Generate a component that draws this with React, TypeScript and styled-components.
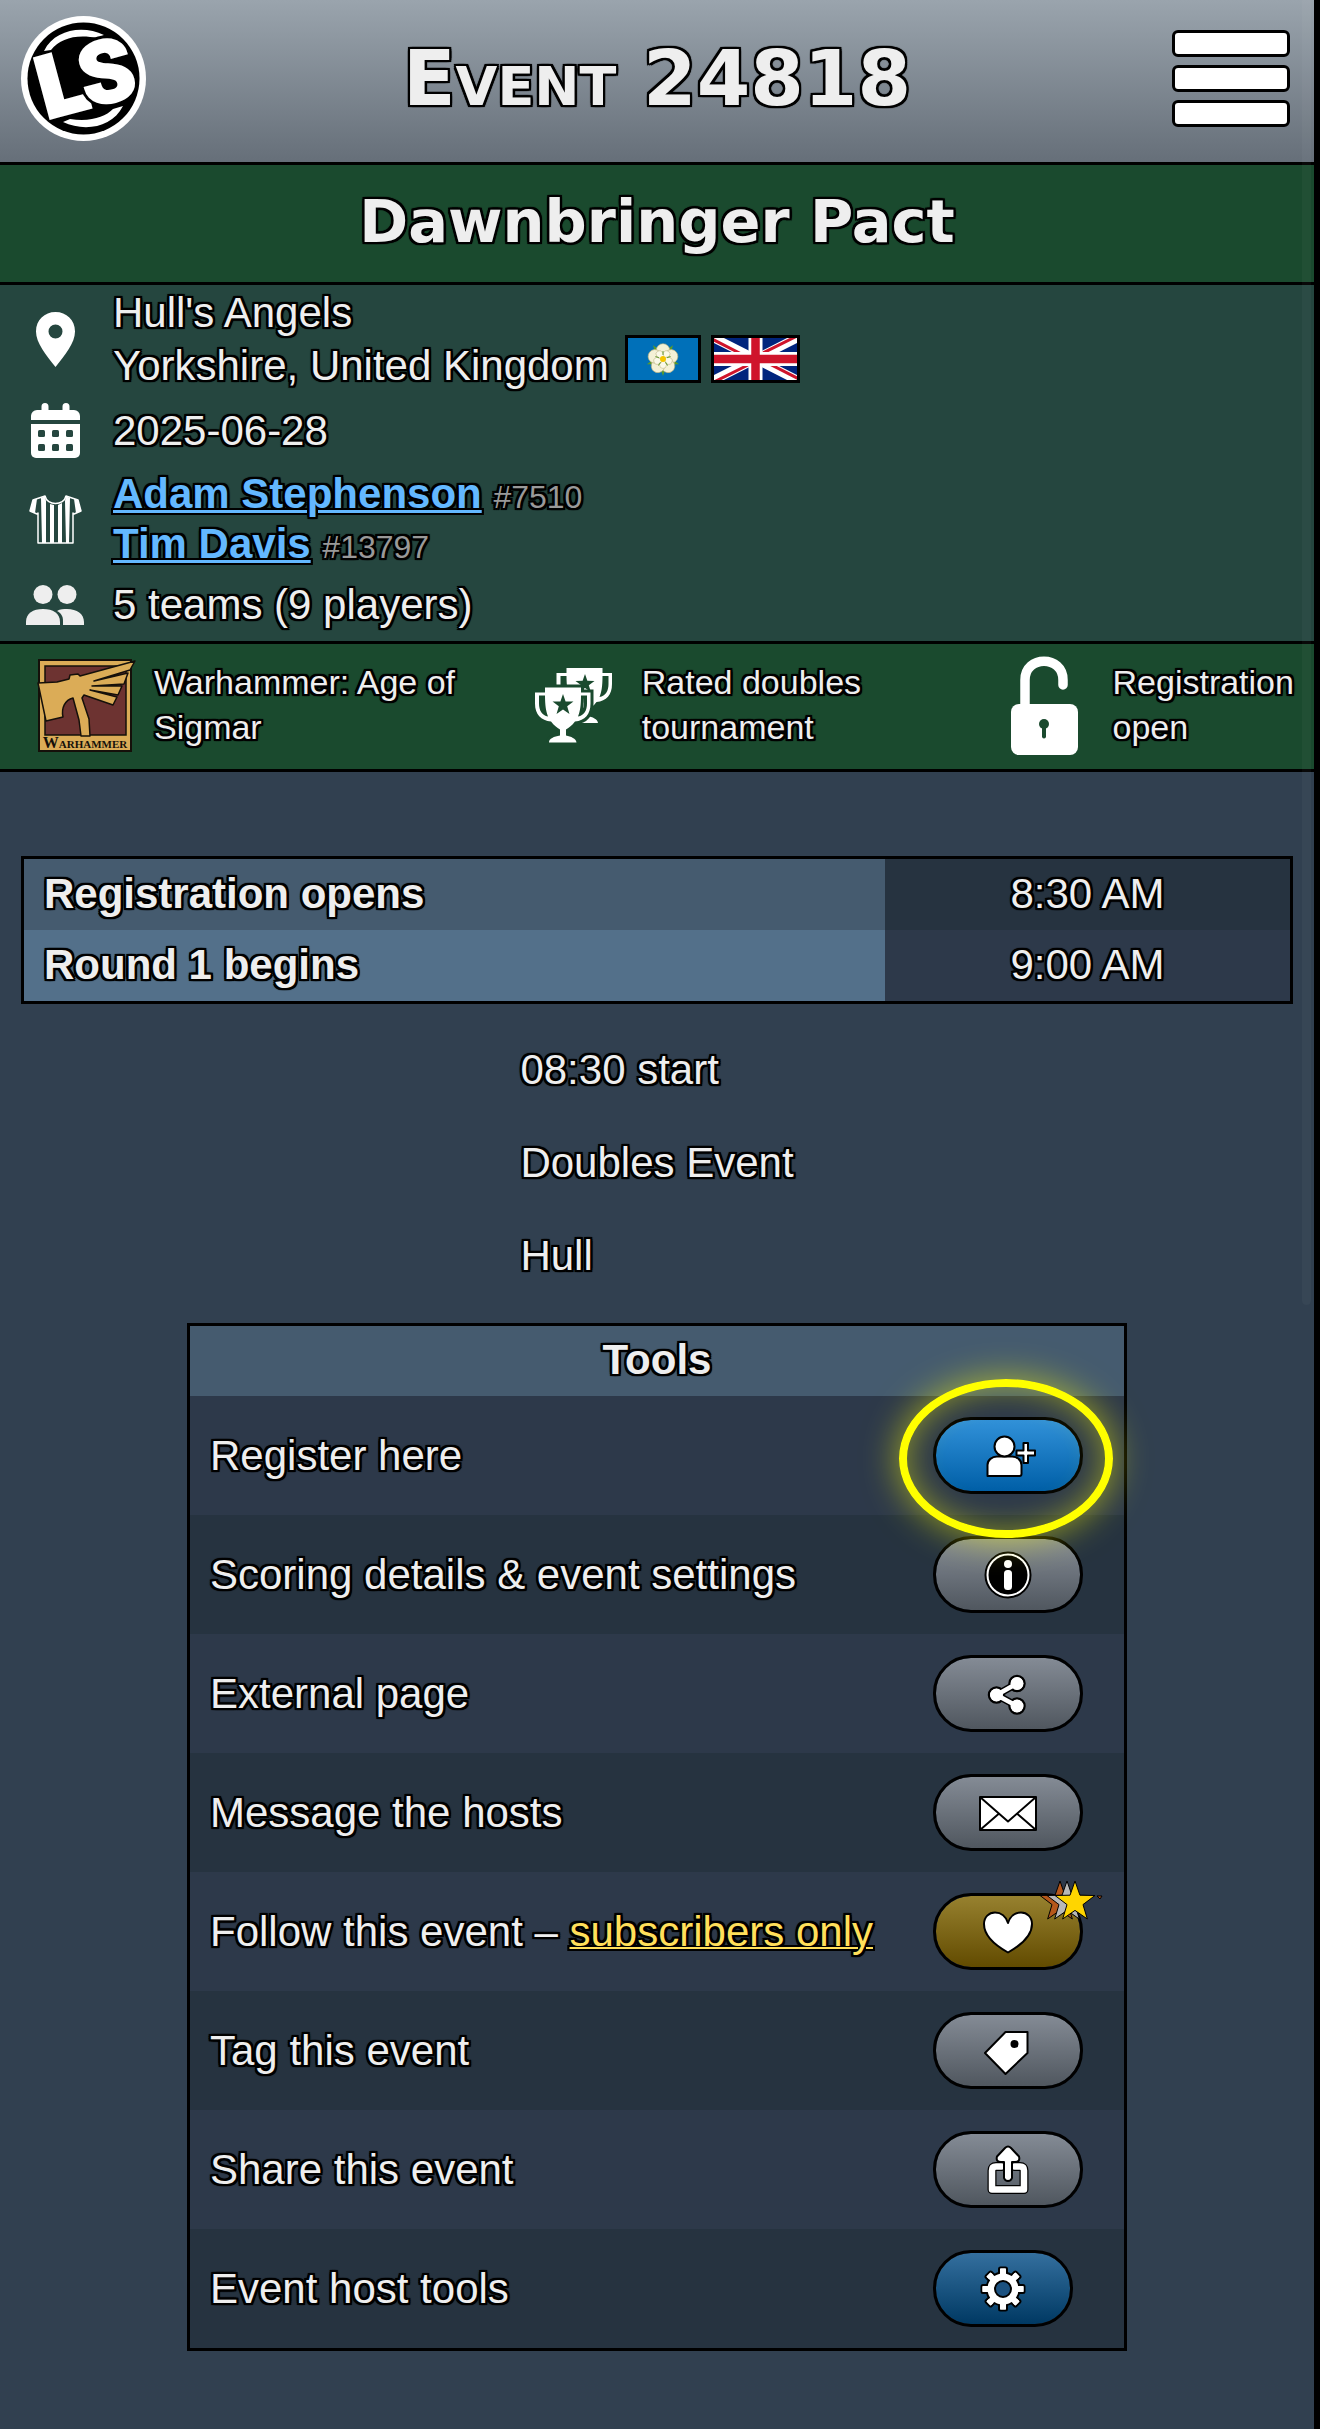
import React from "react";
import styled, { createGlobalStyle, css } from "styled-components";

const outline = css`
  text-shadow:
    -2px -2px 1px #000, 0 -2px 1px #000, 2px -2px 1px #000,
    -2px 0 1px #000, 2px 0 1px #000,
    -2px 2px 1px #000, 0 2px 1px #000, 2px 2px 1px #000,
    -2px -2px 0 #000, 2px -2px 0 #000, -2px 2px 0 #000, 2px 2px 0 #000,
    0 -2px 0 #000, 0 2px 0 #000, -2px 0 0 #000, 2px 0 0 #000;
`;

const GlobalStyle = createGlobalStyle`
  * { box-sizing: border-box; }
  body {
    margin: 0;
    background: #314050;
    color: #eee;
    font-family: "Liberation Sans", Arial, sans-serif;
    font-size: 42px;
    line-height: 52px;
    ${outline}
  }
  svg { display: block; flex: none; overflow: visible; }
`;

const Page = styled.div`
  position: relative;
  min-height: 100vh;
  padding-bottom: 78px;
  border-right: 6px solid #000;
`;

const ScrollThumb = styled.div`
  position: absolute;
  top: 0;
  right: 3px;
  width: 9px;
  height: 1305px;
  border-radius: 0 0 5px 5px;
  background: rgba(255, 255, 255, 0.03);
`;

const TopBar = styled.header`
  display: grid;
  grid-template-columns: 125px 1fr 125px;
  align-items: center;
  height: 165px;
  padding: 0 21px 5px;
  border-bottom: 3px solid #000;
  background: linear-gradient(#9aa4ad, #666f79);
`;

const PageTitle = styled.h1`
  margin: 0;
  text-align: center;
  font: bold 77px/100px "DejaVu Sans", Verdana, sans-serif;
  font-variant: small-caps;
`;

const MenuButton = styled.button`
  display: flex;
  flex-direction: column;
  gap: 8px;
  width: 118px;
  padding: 0;
  margin: 0 auto;
  border: 0;
  background: none;
`;

const MenuBar = styled.span`
  height: 27px;
  border: 3px solid #000;
  border-radius: 6px;
  background: #fff;
`;

const EventName = styled.h2`
  margin: 0;
  padding: 17px 21px 20px;
  border-bottom: 3px solid #000;
  background: #1a4a2e;
  text-align: center;
  font: bold 59px/80px "DejaVu Sans", Verdana, sans-serif;
`;

const Facts = styled.section`
  display: flex;
  flex-direction: column;
  gap: 11px;
  padding: 1px 21px 11px;
  border-bottom: 3px solid #000;
  background: #25463f;
`;

const Fact = styled.div<{ $line: number }>`
  display: grid;
  grid-template-columns: 68px 1fr;
  column-gap: 24px;
  align-items: center;
  line-height: ${(p) => p.$line}px;
  > svg { justify-self: center; }
`;

const Flag = styled.svg`
  display: inline-block !important;
  overflow: hidden !important;
  height: 48px;
  margin: -8px 0 -3px 5px;
  border: 3px solid #000;
  vertical-align: baseline;
  & + & { margin-left: 10px; }
`;

const HostLink = styled.a`
  color: #63b8ff;
  font-weight: bold;
  text-decoration-thickness: 3px;
`;

const HostId = styled.span`
  color: #999;
  font-size: 32px;
  line-height: 1;
`;

const Badges = styled.section`
  display: grid;
  grid-template-columns: 487fr 470fr 299fr;
  align-items: center;
  height: 128px;
  padding: 0 20px 3px 36px;
  border-bottom: 3px solid #000;
  background: #1a4a2e;
  font-size: 34px;
  line-height: 45px;
`;

const Badge = styled.div`
  display: grid;
  grid-template-columns: 100px 1fr;
  column-gap: 18px;
  align-items: center;
  > svg { justify-self: center; }
`;

const Schedule = styled.table`
  width: calc(100% - 42px);
  margin: 84px 21px 40px;
  border: 3px solid #000;
  border-spacing: 0;
  table-layout: fixed;
  th, td { height: 71px; padding: 0 20px 2px; }
  th { width: 68%; text-align: left; background: #455b6f; }
  td { text-align: center; background: #263340; }
  tr:nth-child(2) th { background: #53708a; }
  tr:nth-child(2) td { background: #2d394a; }
`;

const Description = styled.div`
  width: fit-content;
  margin: 0 auto 41px;
  p { margin: 0 0 41px; }
`;

const Tools = styled.table`
  width: calc(100% - 42px);
  max-width: 940px;
  margin: 0 auto;
  border: 3px solid #000;
  border-spacing: 0;
  th { height: 70px; padding: 0 20px 2px; background: #455b6f; }
  td { height: 119px; padding: 0 0 0 20px; background: #2d394a; }
  td + td { width: 209px; padding-left: 18px; }
  tbody tr:nth-child(even) td { background: #263340; }
`;

const SubscriberLink = styled.a`
  color: #ffdf5a;
  text-decoration-thickness: 2px;
`;

const ButtonSlot = styled.div`
  position: relative;
  width: fit-content;
`;

const tones = {
  grey: "linear-gradient(#848b95, #50575f)",
  blue: "linear-gradient(#3191d9, #005fa7)",
  gold: "linear-gradient(#97812f, #624b00)",
  navy: "linear-gradient(#346f9e, #003963)",
};
type Tone = keyof typeof tones;

const PillButton = styled.button<{ $tone: Tone; $narrow?: boolean }>`
  display: flex;
  align-items: center;
  justify-content: center;
  width: ${(p) => (p.$narrow ? 140 : 150)}px;
  height: 77px;
  padding: 0;
  border: 3px solid #000;
  border-radius: 38px;
  background: ${(p) => tones[p.$tone]} padding-box;
`;

const Highlight = styled.span`
  position: absolute;
  z-index: 2;
  top: -38px;
  left: -34px;
  width: 214px;
  height: 159px;
  border: 8px solid #ff0;
  border-radius: 50%;
  box-shadow: 0 0 34px 2px rgba(255, 255, 0, 0.5), inset 0 0 32px rgba(255, 255, 0, 0.45);
  pointer-events: none;
`;

const StarBadge = styled.svg`
  position: absolute;
  z-index: 1;
  top: -14px;
  left: 104px;
`;

const starPoints = (cx: number, cy: number, r: number) =>
  Array.from({ length: 10 }, (_, i) => {
    const radius = i % 2 ? r * 0.4 : r;
    const a = -Math.PI / 2 + (i * Math.PI) / 5;
    return `${(cx + radius * Math.cos(a)).toFixed(2)},${(cy + radius * Math.sin(a)).toFixed(2)}`;
  }).join(" ");

const Logo = () => (
  <svg width="125" height="125" viewBox="0 0 125 125" role="img" aria-label="LS">
    <circle cx="62.500" cy="62.500" r="62.500" fill="#fff" />
    <circle cx="62.500" cy="62.500" r="56" fill="#000" />
    <path d="M23 35C34 13 62 9 83 19L77 22C55 18 40 22 30 34Z" fill="#fff" />
    <path d="M102 90C91 112 63 116 42 106L49 103C70 106 84 101 92 93Z" fill="#fff" />
    <g fontFamily="Roboto, sans-serif" fontWeight="900" fill="#fff" stroke="#fff" strokeWidth="5" style={{ textShadow: "none" }}>
      <text transform="translate(26 102) rotate(-15)" fontSize="84">L</text>
      <text transform="translate(67 92) rotate(-15)" fontSize="86" stroke="#000" strokeWidth="9" paintOrder="stroke">S</text>
      <text transform="translate(67 92) rotate(-15)" fontSize="86" strokeWidth="3">S</text>
    </g>
  </svg>
);

const PinIcon = () => (
  <svg width="39" height="55" viewBox="0 0 39 55">
    <path fill="#fff" fillRule="evenodd" d="M19.500 0C8.500 0 0 8 0 19.500C0 31 10 43 19.500 55C29 43 39 31 39 19.500C39 8 30.500 0 19.500 0ZM19.500 12.500A7 7 0 1 1 19.500 26.500A7 7 0 1 1 19.500 12.500Z" />
  </svg>
);

const CalendarIcon = () => (
  <svg width="49" height="55" viewBox="0 0 49 55">
    <path fill="#fff" d="M10.500 3.500a3.500 3.500 0 0 1 7 0V7h14V3.500a3.500 3.500 0 0 1 7 0V7H43a6 6 0 0 1 6 6v4H0v-4a6 6 0 0 1 6-6h4.500Z" />
    <path fill="#fff" d="M0 21h49v29a5 5 0 0 1-5 5H5a5 5 0 0 1-5-5Z" />
    {[27, 41].map((y) => [7, 21, 35].map((x) => <rect key={`${x}-${y}`} x={x} y={y} width="7" height="7" rx="1.500" fill="#25463f" />))}
  </svg>
);

const JerseyIcon = () => (
  <svg width="53" height="49" viewBox="0 0 53 49">
    <path fill="none" stroke="#fff" strokeWidth="1.500" strokeLinejoin="round" d="M16 1L4 5L1 16L8 19L9 18V48H44V18L45 19L52 16L49 5L37 1C35 11 18 11 16 1Z" />
    <path fill="#fff" d="M4 5L8 4L6 18L1 16ZM49 5L45 4L47 18L52 16ZM12 3L16 1L17 6V48H13ZM21 9L25 10V48H21ZM29 10L33 8V48H29ZM36 6L37 1L41 3L40 48H37Z" />
  </svg>
);

const PeopleIcon = () => (
  <svg width="58" height="40" viewBox="0 0 58 40" fill="#eee">
    <circle cx="17" cy="9.500" r="9.500" />
    <circle cx="41" cy="9.500" r="9.500" />
    <path d="M0 40V37C0 28 7 24 17 24S34 28 34 37V40Z" />
    <path d="M37 40V36C37 31 35 28 31 26C34 24 38 24 41 24C51 24 58 29 58 37V40Z" />
  </svg>
);

const WarhammerIcon = () => (
  <svg width="100" height="95" viewBox="0 0 100 95">
    <rect x="3" y="2" width="92" height="91" fill="#dbac57" stroke="#15100a" strokeWidth="2" />
    <rect x="9" y="8" width="81" height="69" fill="#6d3331" stroke="#15100a" strokeWidth="1.500" />
    <path
      fill="#dbac57"
      stroke="#15100a"
      strokeWidth="1.500"
      strokeLinejoin="round"
      d="M2 25L21 24L33 21L34 17L42 16L44 18L99 3L94 12L58 23L92 15L88 26L56 28L86 28L82 37L54 32L81 39L77 47L48 37L46 40L53 61L54 78L45 78L43 62L37 40C29 42 25 50 27 59L10 63Z"
    />
    <text x="49" y="90" textAnchor="middle" fontFamily="Liberation Serif, serif" fontSize="16" fontWeight="bold" fill="#15100a" style={{ fontVariant: "small-caps", textShadow: "none" }}>
      Warhammer
    </text>
  </svg>
);

const cup =
  "M10 0H46V5H55.500V16C55.500 27 50 33 40 34C37 38 34 40 31 42V48C36 49 41 51 41.500 55H14C14 51 19 49 25 48V42C22 40 19 38 16 34C6 33 0 27 0 16V5H10ZM10 8H4V16C4 23 7 28 13 29C11 24 10 18 10 8ZM46 8C46 18 45 24 43 29C49 28 52 23 52 16V8Z";

const TrophyIcon = () => (
  <svg width="78" height="76" viewBox="0 0 78 76">
    <path d={cup} transform="translate(21.500 1)" fill="#fff" fillRule="evenodd" />
    <polygon points={starPoints(50, 17, 10)} fill="#1a4a2e" />
    <path d={cup} transform="translate(0 20.500)" fill="#1a4a2e" stroke="#1a4a2e" strokeWidth="6" />
    <path d={cup} transform="translate(0 20.500)" fill="#fff" fillRule="evenodd" />
    <polygon points={starPoints(28, 38, 11)} fill="#1a4a2e" />
  </svg>
);

const LockIcon = () => (
  <svg width="67" height="99" viewBox="0 0 67 99">
    <path d="M14 52V24C14 -1 52 -1 52 24V29" fill="none" stroke="#fff" strokeWidth="9.500" strokeLinecap="round" />
    <rect y="48" width="67" height="51" rx="8" fill="#fff" />
    <circle cx="33" cy="68" r="5" fill="#1a4a2e" />
    <path d="M33 68V80.500" stroke="#1a4a2e" strokeWidth="4" strokeLinecap="round" />
  </svg>
);

const YorkshireFlag = () => (
  <Flag width="76" viewBox="0 0 70 42" role="img" aria-label="Yorkshire">
    <rect width="70" height="42" fill="#0070b9" />
    <polygon points={starPoints(35, 21, 17)} fill="#5a9a2a" transform="rotate(36 35 21)" />
    {[0, 72, 144, 216, 288].map((a) => (
      <circle key={a} cx="35" cy="12.500" r="6.800" fill="#f4f1d6" stroke="#b9ae7a" strokeWidth="0.600" transform={`rotate(${a} 35 21)`} />
    ))}
    {[36, 108, 180, 252, 324].map((a) => (
      <ellipse key={a} cx="35" cy="15.500" rx="3.500" ry="4" fill="#fbf9e8" stroke="#b9ae7a" strokeWidth="0.500" transform={`rotate(${a} 35 21)`} />
    ))}
    {[0, 72, 144, 216, 288].map((a) => (
      <path key={a} d="M35 17V13" stroke="#6a9a3a" strokeWidth="1" transform={`rotate(${a} 35 21)`} />
    ))}
    <circle cx="35" cy="21" r="3" fill="#f5c400" />
  </Flag>
);

const UnionFlag = () => (
  <Flag width="89" viewBox="0 0 83 42" role="img" aria-label="United Kingdom">
    <rect width="83" height="42" fill="#00247d" />
    <path d="M0 0L83 42M83 0L0 42" stroke="#fff" strokeWidth="9" />
    <path d="M-1 1.500L41 23M84 40.500L42 19M82 -1.500L40 19.500M1 43.500L43 22.500" stroke="#cf142b" strokeWidth="3" />
    <path d="M41.500 0V42M0 21H83" stroke="#fff" strokeWidth="14" />
    <path d="M41.500 0V42M0 21H83" stroke="#cf142b" strokeWidth="8.500" />
  </Flag>
);

const Glyph = ({ children }: { children: React.ReactNode }) => (
  <svg width="60" height="50" viewBox="-30 -25 60 50" fill="#fff" stroke="#000" strokeWidth="2" strokeLinejoin="round">
    {children}
  </svg>
);

const RegisterGlyph = () => (
  <Glyph>
    <path d="M15.500 -13h4.500v7.500h7v5h-7v7.500h-4.500v-7.500h-7v-5h7Z" />
    <path d="M-20.500 20V9C-20.500 4 -16 .500 -11 .500H4C9 .500 13.500 4 13.500 9V18Q13.500 20 11.500 20Z" />
    <circle cx="-3.500" cy="-9.500" r="10" />
  </Glyph>
);

const InfoGlyph = () => (
  <Glyph>
    <circle r="22.500" />
    <circle r="19.500" fill="#000" stroke="none" />
    <circle cy="-11" r="4" stroke="none" />
    <rect x="-4" y="-5" width="8" height="20" rx="3.500" stroke="none" />
  </Glyph>
);

const LinkGlyph = () => (
  <Glyph>
    <g stroke="#000" strokeWidth="2.500">
      <circle cx="-11.500" cy="1" r="7.500" />
      <circle cx="9" cy="-10.500" r="7.500" />
      <circle cx="9" cy="12" r="7.500" />
    </g>
    <path d="M9 -10.500L-11.500 1L9 12" fill="none" strokeWidth="7.500" />
    <path d="M9 -10.500L-11.500 1L9 12" fill="none" stroke="#fff" strokeWidth="4.500" />
    <g stroke="none">
      <circle cx="-11.500" cy="1" r="6.500" />
      <circle cx="9" cy="-10.500" r="6.500" />
      <circle cx="9" cy="12" r="6.500" />
    </g>
  </Glyph>
);

const MailGlyph = () => (
  <Glyph>
    <rect x="-28" y="-16" width="56" height="33" />
    <path d="M-28 -16L0 8.500L28 -16M-28 17L-9.500 1M28 17L9.500 1" fill="none" />
  </Glyph>
);

const HeartGlyph = () => (
  <Glyph>
    <path d="M0 20.500C-17 11 -24 1 -24 -8C-24 -15 -19 -19.500 -13 -19.500C-7 -19.500 -2 -15.500 0 -9C2 -15.500 7 -19.500 13 -19.500C19 -19.500 24 -15 24 -8C24 1 17 11 0 20.500Z" />
  </Glyph>
);

const TagGlyph = () => (
  <Glyph>
    <path d="M-2.500 -19H19.500V2L-2.500 23L-23 2Z" />
    <circle cx="6.500" cy="-7" r="4" fill="#000" stroke="none" />
  </Glyph>
);

const upload = "M-6.500 -3.500H-12Q-16 -3.500 -16 .500V19.500H16V.500Q16 -3.500 12 -3.500H6.500";

const ShareGlyph = () => (
  <Glyph>
    <path d={upload} fill="none" strokeWidth="9" strokeLinecap="round" />
    <path d={upload} fill="none" stroke="#fff" strokeWidth="6.500" strokeLinecap="round" />
    <path d="M0 -23.500Q1.500 -23.500 3 -22L11 -13.500Q12.500 -8 7 -8H4V8Q3 11 0 11Q-3 11 -4 8V-8H-7Q-12.500 -8 -11 -13.500L-3 -22Q-1.500 -23.500 0 -23.500Z" />
  </Glyph>
);

const GearGlyph = () => (
  <Glyph>
    {[0, 45, 90, 135].map((a) => (
      <rect key={a} x="-4" y="-21.500" width="8" height="43" rx="1.500" transform={`rotate(${a})`} />
    ))}
    <circle r="16.500" />
    {[0, 45, 90, 135].map((a) => (
      <rect key={a} x="-3" y="-20.500" width="6" height="41" rx="1" stroke="none" transform={`rotate(${a})`} />
    ))}
    <circle r="8" fill="#1b5180" />
  </Glyph>
);

type Tool = {
  label: React.ReactNode;
  name: string;
  glyph: React.ReactNode;
  tone: Tone;
  narrow?: boolean;
  highlighted?: boolean;
  starred?: boolean;
};

const tools: Tool[] = [
  { name: "Register here", label: "Register here", glyph: <RegisterGlyph />, tone: "blue", highlighted: true },
  { name: "Scoring details", label: "Scoring details & event settings", glyph: <InfoGlyph />, tone: "grey" },
  { name: "External page", label: "External page", glyph: <LinkGlyph />, tone: "grey" },
  { name: "Message the hosts", label: "Message the hosts", glyph: <MailGlyph />, tone: "grey" },
  {
    name: "Follow this event",
    label: (
      <>
        Follow this event – <SubscriberLink href="#subscribe">subscribers only</SubscriberLink>
      </>
    ),
    glyph: <HeartGlyph />,
    tone: "gold",
    starred: true,
  },
  { name: "Tag this event", label: "Tag this event", glyph: <TagGlyph />, tone: "grey" },
  { name: "Share this event", label: "Share this event", glyph: <ShareGlyph />, tone: "grey" },
  { name: "Event host tools", label: "Event host tools", glyph: <GearGlyph />, tone: "navy", narrow: true },
];

export default function App() {
  return (
    <>
      <GlobalStyle />
      <Page>
        <TopBar>
          <a href="#home" aria-label="Home">
            <Logo />
          </a>
          <PageTitle>Event 24818</PageTitle>
          <MenuButton type="button" aria-label="Menu">
            <MenuBar />
            <MenuBar />
            <MenuBar />
          </MenuButton>
        </TopBar>
        <main>
          <EventName>Dawnbringer Pact</EventName>
          <Facts>
            <Fact $line={53}>
              <PinIcon />
              <div>
                Hull's Angels
                <br />
                Yorkshire, United Kingdom <YorkshireFlag />
                <UnionFlag />
              </div>
            </Fact>
            <Fact $line={50}>
              <CalendarIcon />
              <div>2025-06-28</div>
            </Fact>
            <Fact $line={50}>
              <JerseyIcon />
              <div>
                <HostLink href="#host-7510">Adam Stephenson</HostLink> <HostId>#7510</HostId>
                <br />
                <HostLink href="#host-13797">Tim Davis</HostLink> <HostId>#13797</HostId>
              </div>
            </Fact>
            <Fact $line={50}>
              <PeopleIcon />
              <div>5 teams (9 players)</div>
            </Fact>
          </Facts>
          <Badges>
            <Badge>
              <WarhammerIcon />
              <span>Warhammer: Age of Sigmar</span>
            </Badge>
            <Badge>
              <TrophyIcon />
              <span>Rated doubles tournament</span>
            </Badge>
            <Badge>
              <LockIcon />
              <span>Registration open</span>
            </Badge>
          </Badges>
          <Schedule>
            <tbody>
              <tr>
                <th scope="row">Registration opens</th>
                <td>8:30 AM</td>
              </tr>
              <tr>
                <th scope="row">Round 1 begins</th>
                <td>9:00 AM</td>
              </tr>
            </tbody>
          </Schedule>
          <Description>
            <p>08:30 start</p>
            <p>Doubles Event</p>
            <p>Hull</p>
          </Description>
          <Tools>
            <thead>
              <tr>
                <th colSpan={2}>Tools</th>
              </tr>
            </thead>
            <tbody>
              {tools.map((tool) => (
                <tr key={tool.name}>
                  <td>{tool.label}</td>
                  <td>
                    <ButtonSlot>
                      <PillButton type="button" aria-label={tool.name} $tone={tool.tone} $narrow={tool.narrow}>
                        {tool.glyph}
                      </PillButton>
                      {tool.highlighted && <Highlight />}
                      {tool.starred && (
                        <StarBadge width="66" height="44" viewBox="0 0 66 44" stroke="#000" strokeWidth="1">
                          <polygon points={starPoints(23, 23, 21)} fill="#b5571b" />
                          <polygon points={starPoints(30, 23, 21)} fill="#b8b8b8" />
                          <polygon points={starPoints(38, 23, 21)} fill="#ffd500" />
                          <path d="M60 17H65L63 20Z" fill="#b5571b" />
                        </StarBadge>
                      )}
                    </ButtonSlot>
                  </td>
                </tr>
              ))}
            </tbody>
          </Tools>
        </main>
        <ScrollThumb />
      </Page>
    </>
  );
}
